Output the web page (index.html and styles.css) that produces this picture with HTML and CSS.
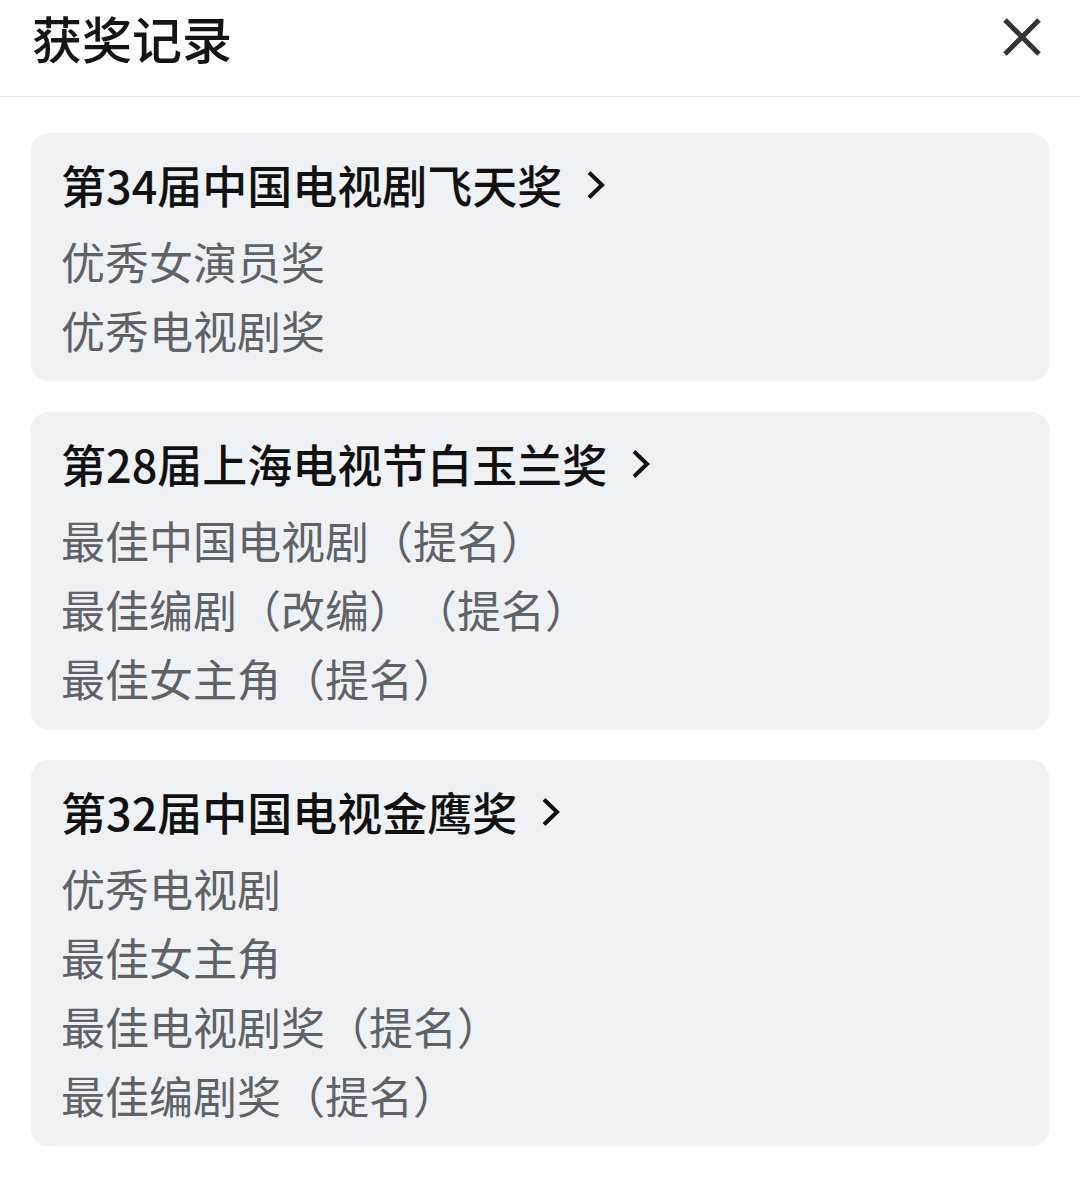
FILE: index.html
```html
<!DOCTYPE html>
<html lang="zh-CN">
<head>
  <meta charset="UTF-8">
  <meta name="viewport" content="width=device-width, initial-scale=1.0">
  <title>获奖记录</title>
  <link rel="stylesheet" href="styles.css">
</head>
<body>
  <header>
    <div class="title">获奖记录</div>
    <button class="close" aria-label="关闭">
      <svg width="40" height="40" viewBox="0 0 40 40"><path d="M3 3 L37 37 M37 3 L3 37" stroke="#333" stroke-width="5" fill="none"/></svg>
    </button>
  </header>

  <div class="list">
    <div class="card">
      <div class="award">第34届中国电视剧飞天奖<span class="chev"><svg width="20" height="30" viewBox="0 0 20 30"><path d="M3 2.5 L16 15 L3 27.5" stroke="#111" stroke-width="4" fill="none"/></svg></span></div>
      <div class="item">优秀女演员奖</div>
      <div class="item">优秀电视剧奖</div>
    </div>

    <div class="card">
      <div class="award">第28届上海电视节白玉兰奖<span class="chev"><svg width="20" height="30" viewBox="0 0 20 30"><path d="M3 2.5 L16 15 L3 27.5" stroke="#111" stroke-width="4" fill="none"/></svg></span></div>
      <div class="item">最佳中国电视剧（提名）</div>
      <div class="item">最佳编剧（改编）（提名）</div>
      <div class="item">最佳女主角（提名）</div>
    </div>

    <div class="card">
      <div class="award">第32届中国电视金鹰奖<span class="chev"><svg width="20" height="30" viewBox="0 0 20 30"><path d="M3 2.5 L16 15 L3 27.5" stroke="#111" stroke-width="4" fill="none"/></svg></span></div>
      <div class="item">优秀电视剧</div>
      <div class="item">最佳女主角</div>
      <div class="item">最佳电视剧奖（提名）</div>
      <div class="item">最佳编剧奖（提名）</div>
    </div>
  </div>
</body>
</html>
```

FILE: styles.css
```css
* {
  box-sizing: border-box;
}
body {
  margin: 0;
  background: #fff;
  font-family: "Noto Sans CJK SC", "Noto Sans", sans-serif;
  color: #111;
  text-spacing-trim: space-all;
}
header {
  height: 97px;
  display: flex;
  align-items: center;
  justify-content: space-between;
  padding: 0 38px 22px 32px;
  border-bottom: 1px solid #e6e6e6;
}
.title {
  font-size: 50px;
  font-weight: 500;
  line-height: 1;
  color: #141414;
}
.close {
  background: none;
  border: none;
  padding: 0;
  width: 40px;
  height: 40px;
  cursor: pointer;
}
.list {
  padding: 36px 31px 0;
  display: flex;
  flex-direction: column;
  gap: 31px;
}
.card {
  background: #eff2f5;
  border-radius: 18px;
  padding: 17px 30px 16px;
  box-shadow: 0 1px 3px rgba(0, 0, 0, 0.03);
}
.award {
  font-size: 45px;
  font-weight: 500;
  line-height: 69px;
  color: #111;
  margin-bottom: 8px;
  display: flex;
  align-items: center;
}
.chev {
  display: inline-flex;
  margin-left: 24px;
}
.item {
  font-size: 44px;
  line-height: 69px;
  color: #5f6266;
}
```
